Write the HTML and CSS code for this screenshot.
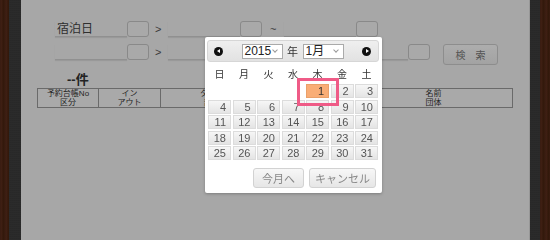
FILE: index.html
```html
<!DOCTYPE html>
<html lang="ja">
<head>
    <meta charset="UTF-8">
    <meta name="viewport" content="width=device-width, initial-scale=1.0">
    <title>予約一覧</title>
    <link rel="stylesheet" href="styles.css">
</head>
<body>
    <div class="frame">
        <div class="wood"></div>
        <div class="rim"></div>
        <main class="panel">
            <div class="search">
                <div class="row">
                    <div class="field"><span class="input">宿泊日</span><span class="pick"></span></div>
                    <span class="sep">&gt;</span>
                    <div class="field"><span class="input"></span><span class="pick"></span></div>
                    <span class="sep">~</span>
                    <div class="field"><span class="input"></span><span class="pick"></span></div>
                </div>
                <div class="row">
                    <div class="field"><span class="input"></span><span class="pick"></span></div>
                    <span class="sep">&gt;</span>
                    <div class="field"><span class="input"></span><span class="pick"></span></div>
                    <span class="sep">~</span>
                    <div class="field"><span class="input wide"></span><span class="pick"></span></div>
                    <button class="find">検　索</button>
                </div>
            </div>
            <p class="count">--件</p>
            <table class="list">
                <tr>
                    <th class="c1">予約台帳No<br>区分</th>
                    <th class="c2">イン<br>アウト</th>
                    <th class="c3">タイプ<br>部屋</th>
                    <th class="c4">人数<br>泊数</th>
                    <th class="c5">名前<br>団体</th>
                </tr>
            </table>
        </main>
        <div class="rim right"></div>
        <div class="wood"></div>
    </div>

    <div class="overlay"></div>

    <div class="picker">
        <div class="picker-head">
            <span class="nav prev"></span>
            <div class="ym">
                <span class="select year">2015<i class="chev"></i></span>
                <span class="unit">年</span>
                <span class="select month">1月<i class="chev"></i></span>
            </div>
            <span class="nav next"></span>
        </div>
        <div class="days week">
            <span>日</span><span>月</span><span>火</span><span>水</span><span>木</span><span>金</span><span>土</span>
        </div>
        <div class="days dates" id="dates"></div>
        <div class="picker-foot">
            <button class="btn">今月へ</button>
            <button class="btn">キャンセル</button>
        </div>
    </div>

    <div class="mark"></div>

    <script>
        // 2015年1月 : 1日は木曜日
        const dates = document.getElementById("dates");
        const offset = 4;
        for (let i = 0; i < offset; i++) {
            const blank = document.createElement("span");
            blank.className = "blank";
            dates.appendChild(blank);
        }
        for (let d = 1; d <= 31; d++) {
            const cell = document.createElement("span");
            cell.className = d === 1 ? "day today" : "day";
            cell.textContent = d;
            dates.appendChild(cell);
        }
    </script>
</body>
</html>
```

FILE: styles.css
```css
html, body {
    margin: 0;
    padding: 0;
    height: 100%;
}
body {
    font-family: "Liberation Sans", "Noto Sans CJK JP", sans-serif;
    background: #4e2616;
    overflow: hidden;
}
.frame {
    display: flex;
    height: 240px;
}
.wood {
    width: 9px;
    background: repeating-linear-gradient(90deg, #52291a 0, #5c2e1c 2px, #45220f 3px, #542a18 5px);
}
.frame .wood:last-child {
    width: 10px;
}
.rim {
    width: 12px;
    background: repeating-linear-gradient(0deg, #3a3a3a 0, #424242 1px, #333 2px);
}
.rim.right {
    width: 10px;
    border-left: 1px solid #d8d8d8;
}
.panel {
    flex: 1;
    background: #efefef;
    padding: 21px 0 0 0;
}
.search {
    padding-left: 34px;
}
.row {
    display: flex;
    align-items: flex-start;
    margin-bottom: 7px;
}
.field {
    display: flex;
    height: 16px;
}
.input {
    width: 72px;
    height: 16px;
    box-sizing: border-box;
    border-bottom: 1px solid #cfcfcf;
    box-shadow: 0 1px 1px rgba(0, 0, 0, 0.08);
    font-size: 12px;
    line-height: 16px;
    color: #444;
    padding-left: 2px;
}
.input.wide {
    width: 124px;
}
.pick {
    width: 22px;
    height: 16px;
    box-sizing: border-box;
    border: 1px solid #c4c4c4;
    border-radius: 3px;
    background: #f3f3f3;
}
.sep {
    width: 19px;
    padding-left: 6px;
    box-sizing: border-box;
    font-size: 11px;
    line-height: 16px;
    color: #555;
}
.row .sep:nth-child(4) {
    width: 22px;
    padding-left: 8px;
}
.find {
    margin-left: 13px;
    width: 55px;
    height: 21px;
    border: 1px solid #cacaca;
    border-radius: 3px;
    background: linear-gradient(#f8f8f8, #e9e9e9);
    font-family: inherit;
    font-size: 10px;
    color: #777;
    padding: 0;
}
.count {
    margin: 2px 0 0 46px;
    font-size: 13px;
    line-height: 16px;
    font-weight: bold;
    color: #333;
}
.list {
    margin-left: 16px;
    width: 476px;
    border-collapse: collapse;
    table-layout: fixed;
}
.list th {
    border: 1px solid #999;
    background: #f3f3f3;
    font-size: 8px;
    line-height: 9px;
    font-weight: normal;
    color: #333;
    height: 18px;
    padding: 0;
}
.c1 { width: 60px; }
.c2 { width: 61px; }
.c3 { width: 102px; }
.c4 { width: 90px; }

.overlay {
    position: fixed;
    inset: 0;
    background: rgba(0, 0, 0, 0.3);
}

.picker {
    position: absolute;
    left: 205px;
    top: 37px;
    width: 177px;
    height: 156px;
    box-sizing: border-box;
    padding: 3px 3px 0 2px;
    background: #fff;
    border-radius: 2px;
    box-shadow: 0 1px 3px rgba(0, 0, 0, 0.25);
}
.picker-head {
    display: flex;
    align-items: center;
    justify-content: space-between;
    height: 22px;
    padding: 0 7px 0 6px;
    box-sizing: border-box;
    background: linear-gradient(#efefef, #e2e2e2);
    border: 1px solid #d6d6d6;
    border-radius: 3px;
}
.nav {
    width: 9px;
    height: 9px;
    border-radius: 50%;
    background: #111;
    position: relative;
}
.nav::after {
    content: "";
    position: absolute;
    top: 2.5px;
    border-top: 2px solid transparent;
    border-bottom: 2px solid transparent;
}
.prev::after {
    left: 3px;
    border-right: 3px solid #fff;
}
.next::after {
    left: 4px;
    border-left: 3px solid #fff;
}
.ym {
    display: flex;
    align-items: center;
}
.select {
    position: relative;
    width: 41px;
    height: 15px;
    box-sizing: border-box;
    border: 1px solid #aaa;
    background: #fff;
    font-size: 12px;
    line-height: 13px;
    padding-left: 2px;
    color: #222;
}
.chev {
    position: absolute;
    right: 5px;
    top: 3px;
    width: 3px;
    height: 3px;
    border-right: 1px solid #999;
    border-bottom: 1px solid #999;
    transform: rotate(45deg);
}
.unit {
    font-size: 11px;
    color: #333;
    width: 20px;
    text-align: center;
}
.days {
    display: grid;
    grid-template-columns: repeat(7, 23px);
    column-gap: 1.5px;
    margin-left: 1px;
}
.week {
    margin-top: 3px;
    height: 17px;
    align-items: center;
    font-size: 10px;
    color: #333;
    text-align: center;
}
.dates {
    margin-top: 2px;
    grid-auto-rows: 14px;
    row-gap: 1.5px;
}
.day {
    box-sizing: border-box;
    border: 1px solid #dcdcdc;
    background: linear-gradient(#f6f6f6, #e4e4e4);
    font-size: 11px;
    line-height: 12px;
    text-align: right;
    padding-right: 4px;
    color: #555;
}
.day.today {
    background: #f9ad76;
    border-color: #eaa06a;
    color: #333;
}
.picker-foot {
    display: flex;
    justify-content: flex-end;
    gap: 5px;
    margin-top: 8px;
    padding-right: 3px;
}
.btn {
    height: 20px;
    padding: 0;
    border: 1px solid #d2d2d2;
    border-radius: 3px;
    background: linear-gradient(#f7f7f7, #e6e6e6);
    font-family: inherit;
    font-size: 11px;
    color: #888;
    width: 51px;
}
.btn + .btn {
    width: 67px;
}

.mark {
    position: absolute;
    left: 297px;
    top: 78px;
    width: 42px;
    height: 28px;
    box-sizing: border-box;
    border: 3px solid #ef5b87;
}
```
